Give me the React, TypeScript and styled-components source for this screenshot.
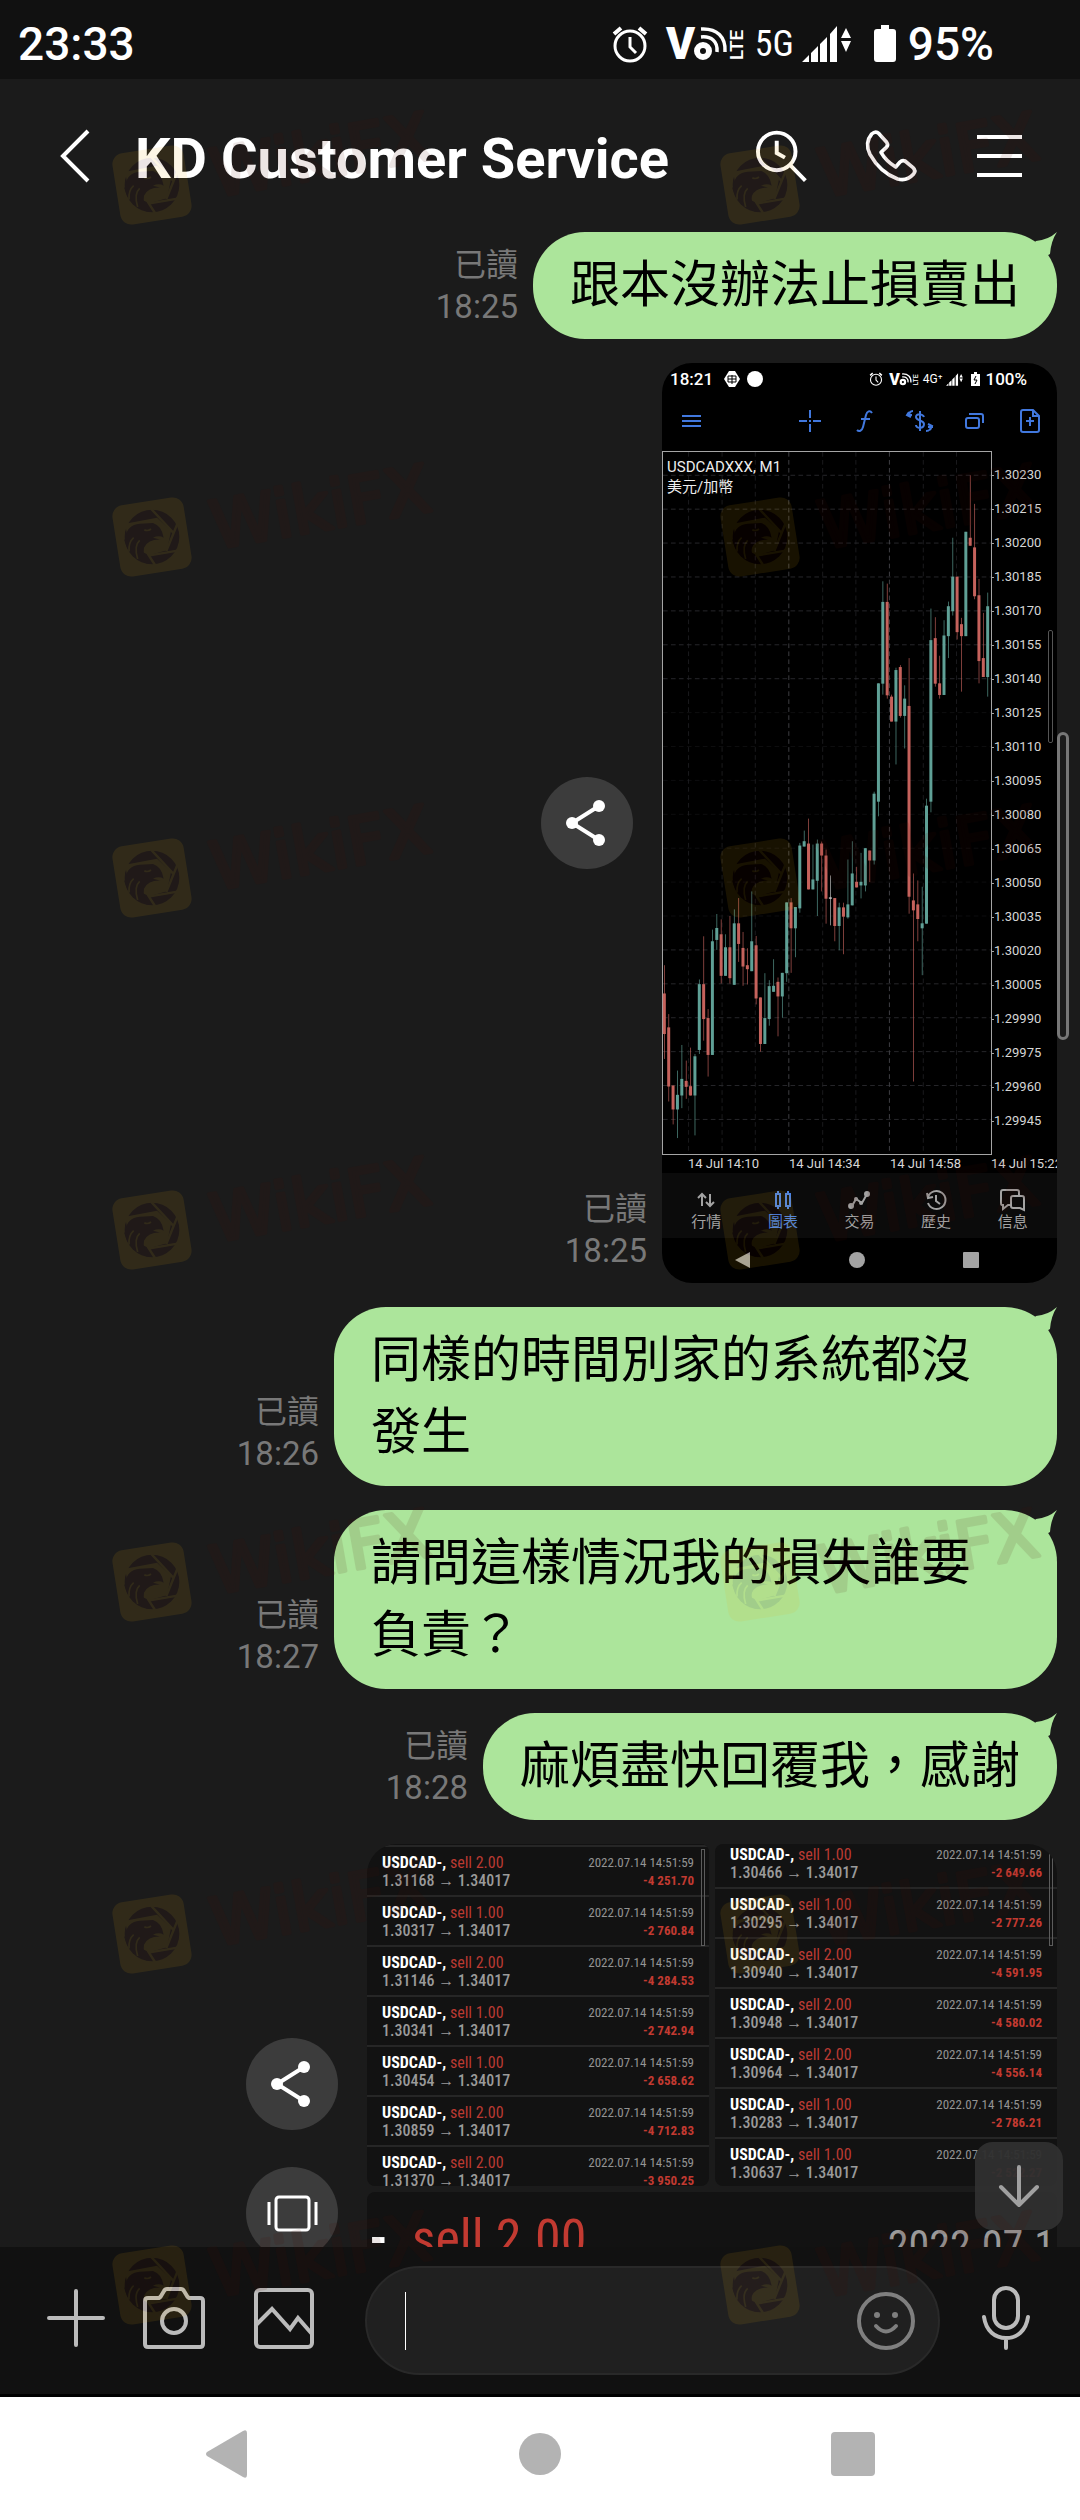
import React from "react";
import styled, { createGlobalStyle } from "styled-components";

const sans = `Roboto, "Noto Sans CJK TC", sans-serif`;
const condensed = `"Roboto Condensed", "Liberation Sans Narrow", Roboto, sans-serif`;

const GlobalStyle = createGlobalStyle`
  *, *::before, *::after { box-sizing: border-box; }
  body { margin: 0; background: #1b1b1b; font-family: ${sans}; }
  button { padding: 0; border: 0; background: none; color: inherit; font: inherit; cursor: pointer; }
  svg { display: block; overflow: visible; }
`;

/* ---------- shell ---------- */

const Screen = styled.div`
  position: relative;
  display: flex;
  flex-direction: column;
  height: 100vh;
  overflow: hidden;
  background: #1b1b1b;
  color: #fff;
`;

const StatusBar = styled.div`
  display: flex;
  align-items: center;
  justify-content: space-between;
  flex: none;
  height: 79px;
  padding: 8px 86px 0 18px;
  background: #111;
  font-size: 46px;
  font-weight: 500;
  line-height: 54px;
`;

const StatusIcons = styled.div`
  display: flex;
  align-items: center;
  gap: 8px;
`;

const Network = styled.span`
  font-family: ${condensed};
  font-size: 36px;
  font-weight: 400;
  line-height: 40px;
`;

const Header = styled.header`
  display: flex;
  align-items: center;
  flex: none;
  height: 153px;
  padding: 0 26px 0 16px;
`;

const HeaderButton = styled.button<{ $width: number }>`
  display: flex;
  align-items: center;
  justify-content: center;
  flex: none;
  width: ${(p) => p.$width}px;
  height: 109px;
`;

const Title = styled.h1`
  flex: 1;
  margin: 0;
  padding: 6px 0 0 1px;
  font-size: 56px;
  font-weight: 700;
  line-height: 66px;
  white-space: nowrap;
`;

/* ---------- conversation ---------- */

const Chat = styled.main`
  position: relative;
  flex: 1;
  min-height: 0;
  overflow: hidden;
`;

const Messages = styled.div`
  display: flex;
  flex-direction: column;
  gap: 24px;
  padding-right: 23px;
`;

const Row = styled.div`
  display: flex;
  justify-content: flex-end;
  align-items: flex-end;
`;

const Meta = styled.div`
  padding-bottom: 11px;
  margin-right: 15px;
  color: #787878;
  font-size: 32px;
  line-height: 42px;
  text-align: right;
`;

const SentAt = styled.div`
  font-size: 33px;
`;

const BubbleBox = styled.div`
  position: relative;
  max-width: 723px;
  padding: 12px 37px 23px;
  border-radius: 52px;
  background: #ace59b;
  color: #000;
  font-family: "Noto Sans CJK TC", sans-serif;
  font-size: 50px;
  line-height: 72px;
`;

const Tail = styled.svg`
  position: absolute;
  top: 0;
  right: 0;
`;

const Side = styled.div`
  display: grid;
  grid-template-rows: 1fr auto 1fr;
  align-self: stretch;
  justify-items: end;
`;

const SideActions = styled.div`
  display: flex;
  flex-direction: column;
  grid-row: 2;
  gap: 37px;
  margin-right: 29px;
`;

const SideMeta = styled.div`
  grid-row: 3;
  align-self: end;
`;

const RoundButton = styled.button`
  width: 92px;
  height: 92px;
  border-radius: 50%;
  background: #3c3c3c;
`;

const ScrollThumb = styled.div`
  position: absolute;
  top: 500px;
  right: 11px;
  width: 12px;
  height: 308px;
  border: 3px solid #777;
  border-radius: 6px;
`;

const JumpButton = styled.button`
  position: absolute;
  right: 17px;
  bottom: 17px;
  display: flex;
  align-items: center;
  justify-content: center;
  width: 88px;
  height: 88px;
  border-radius: 18px;
  background: rgba(48, 48, 48, 0.96);
`;

/* ---------- shared trading screenshot ---------- */

const Shot = styled.div`
  position: relative;
  width: 395px;
  height: 920px;
  border-radius: 30px;
  background: #000;
  overflow: hidden;
`;

const ShotStatus = styled.div`
  display: flex;
  align-items: center;
  height: 32px;
  padding: 0 30px 0 8px;
  font-size: 17px;
  font-weight: 500;
  line-height: 20px;
`;

const ShotStatusLeft = styled.div`
  display: flex;
  align-items: center;
  gap: 8px;
  flex: 1;
`;

const ShotStatusRight = styled.div`
  display: flex;
  align-items: center;
  gap: 4px;
`;

const SmallNetwork = styled.span`
  font-size: 12px;
  font-weight: 400;
`;

const ShotToolbar = styled.div`
  display: flex;
  align-items: center;
  justify-content: space-between;
  height: 52px;
  margin-bottom: 4px;
  padding: 0 15px 0 18px;
  color: #4178de;
`;

const ToolGroup = styled.div`
  display: flex;
  gap: 31px;
`;

const ChartArea = styled.div`
  display: flex;
  height: 704px;
`;

const ChartFrame = styled.div`
  position: relative;
  width: 330px;
  border: 1px solid #a5a5a5;
`;

const Pair = styled.div`
  position: absolute;
  top: 5px;
  left: 4px;
  color: #eee;
  font-size: 15px;
  line-height: 20px;
`;

const Prices = styled.ol`
  flex: 1;
  margin: 0;
  padding: 7px 0 0;
  list-style: none;
  color: #d6d6d6;
  font-size: 13px;
  line-height: 34px;
`;

const Price = styled.li`
  display: flex;
  align-items: center;
  height: 34px;

  &::before {
    content: "";
    width: 2px;
    height: 1px;
    background: #a5a5a5;
  }
`;

const Times = styled.div`
  display: flex;
  height: 18px;
  padding-left: 26px;
  color: #d8d8d8;
  font-size: 13px;
  line-height: 18px;
  white-space: nowrap;
`;

const Time = styled.span`
  flex: none;
  width: 101px;
`;

const Tabs = styled.div`
  display: flex;
  height: 65px;
  padding: 0 6px;
  background: #0b0b0b;
`;

const Tab = styled.button<{ $active?: boolean }>`
  display: flex;
  flex: 1;
  flex-direction: column;
  align-items: center;
  padding-top: 15px;
  color: ${(p) => (p.$active ? "#4a83e6" : "#a3a3a3")};
  font-size: 15px;
  line-height: 20px;
`;

const ShotNav = styled.div`
  display: flex;
  align-items: center;
  justify-content: center;
  gap: 98px;
  height: 43px;
  padding-right: 6px;
`;

const ShotThumb = styled.div`
  position: absolute;
  top: 267px;
  right: 4px;
  width: 5px;
  height: 113px;
  border: 1px solid #555;
  border-radius: 2px;
`;

/* ---------- album ---------- */

const Album = styled.div`
  display: grid;
  grid-template-columns: 342px 342px;
  grid-template-rows: 342px 261px;
  gap: 6px;
`;

const Tile = styled.div<{ $radius: string; $shift: number }>`
  position: relative;
  padding-top: ${(p) => Math.max(p.$shift, 0)}px;
  border-radius: ${(p) => p.$radius};
  background: #121212;
  overflow: hidden;
`;

const Ledger = styled.ul<{ $shift: number }>`
  margin: ${(p) => Math.min(p.$shift, 0)}px 0 0;
  padding: 0;
  list-style: none;
`;

const Deal = styled.li`
  display: grid;
  grid-template-columns: 1fr auto;
  align-content: start;
  height: 50px;
  padding: 7px 15px 0;
  border-top: 2px solid #262626;
  font-family: ${condensed};
  font-size: 16px;
  line-height: 18px;
  white-space: nowrap;
`;

const Instrument = styled.span`
  color: #fff;
  font-weight: 700;
`;

const Order = styled.span`
  color: #bb3a32;
  font-weight: 400;
`;

const Move = styled.span`
  color: #9a9a9a;
  font-weight: 500;
`;

const Stamp = styled.span`
  color: #949494;
  font-size: 13px;
  text-align: right;
`;

const Loss = styled.span`
  color: #c23a31;
  font-size: 13px;
  font-weight: 700;
  text-align: right;
`;

const TileThumb = styled.div`
  position: absolute;
  top: 5px;
  right: 4px;
  width: 4px;
  height: 97px;
  border: 1px solid #5c5c5c;
`;

const WideTile = styled.div`
  display: flex;
  grid-column: 1 / 3;
  align-items: flex-start;
  padding: 14px 0 0 2px;
  border-radius: 8px 8px 30px 30px;
  background: #121212;
  font-family: ${condensed};
  font-size: 52px;
  line-height: 66px;
  white-space: nowrap;
  overflow: hidden;
`;

const WideOrder = styled.span`
  flex: none;
  width: 500px;
  padding-left: 24px;
  color: #c23a31;
`;

const WideStamp = styled.span`
  padding-top: 14px;
  color: #9a9a9a;
  font-size: 42px;
  line-height: 52px;
`;

/* ---------- composer and system navigation ---------- */

const Composer = styled.form`
  display: flex;
  align-items: flex-start;
  flex: none;
  padding: 19px 8px 19px 28px;
  border-bottom: 3px solid #000;
  background: #111;
`;

const ComposerButton = styled.button<{ $width: number }>`
  display: flex;
  align-items: center;
  justify-content: center;
  flex: none;
  width: ${(p) => p.$width}px;
  height: 103px;
`;

const Field = styled.label`
  display: flex;
  align-items: center;
  flex: 1;
  min-width: 0;
  height: 109px;
  margin-left: 21px;
  padding: 0 22px 0 38px;
  border: 2px solid #292929;
  border-radius: 55px;
  background: #202020;
`;

const Caret = styled.span`
  flex: none;
  width: 1px;
  height: 58px;
  background: #fff;
`;

const TextInput = styled.input`
  flex: 1;
  min-width: 0;
  height: 72px;
  padding: 0;
  border: 0;
  outline: 0;
  background: transparent;
  color: #fff;
  font-family: ${sans};
  font-size: 46px;
`;

const SmileIcon = styled.svg`
  flex: none;
`;

const SystemNav = styled.nav`
  display: flex;
  align-items: center;
  justify-content: space-between;
  flex: none;
  height: 123px;
  padding: 0 19% 10px;
  background: #fff;
`;

const Watermarks = styled.div`
  position: absolute;
  inset: 0;
  overflow: hidden;
  pointer-events: none;
`;

const MarkSvg = styled.svg`
  position: absolute;
`;

/* ---------- data ---------- */

// direction, high, body top, body bottom, low
type Candle = [string, number, number, number, number];
const candles: Candle[] = [
  ["r", 498, 583, 705, 780], ["r", 645, 685, 863, 908], ["r", 860, 860, 932, 977],
  ["g", 815, 888, 932, 1018], ["g", 738, 840, 890, 928], ["r", 785, 846, 864, 900],
  ["r", 746, 862, 890, 890], ["g", 765, 772, 890, 1010], ["g", 541, 555, 753, 765],
  ["r", 411, 555, 660, 725], ["r", 630, 657, 768, 833], ["g", 391, 426, 768, 768],
  ["g", 344, 386, 422, 452], ["r", 360, 405, 530, 553], ["g", 405, 444, 530, 530],
  ["r", 350, 444, 537, 553], ["g", 330, 372, 557, 557], ["r", 296, 372, 434, 488],
  ["r", 398, 446, 502, 560], ["r", 447, 498, 510, 556], ["g", 276, 426, 516, 516],
  ["r", 410, 438, 598, 616], ["r", 595, 595, 735, 758], ["g", 522, 657, 735, 735],
  ["g", 543, 561, 660, 680], ["g", 480, 560, 578, 578], ["r", 535, 548, 592, 712],
  ["g", 521, 521, 592, 656], ["g", 309, 309, 522, 548], ["r", 296, 309, 387, 521],
  ["g", 323, 323, 387, 474], ["g", 130, 138, 327, 340], ["g", 93, 125, 141, 141],
  ["r", 57, 132, 270, 270], ["g", 135, 240, 270, 270], ["g", 120, 132, 244, 350],
  ["r", 126, 132, 168, 276], ["r", 150, 168, 298, 373], ["w", 228, 294, 298, 378],
  ["r", 296, 296, 380, 426], ["g", 310, 324, 380, 453], ["r", 310, 324, 352, 465],
  ["g", 180, 315, 354, 358], ["g", 125, 222, 318, 318], ["r", 202, 247, 264, 264],
  ["g", 160, 247, 258, 297], ["g", 146, 146, 258, 276], ["r", 153, 153, 183, 248],
  ["g", -24, -18, 183, 195], ["g", -350, -350, 6, 50], ["g", -657, -595, -349, -316],
  ["r", -650, -595, -314, -304], ["r", -316, -310, -235, -235], ["g", -397, -390, -235, -106],
  ["r", -405, -399, -252, -247], ["g", -344, -304, -252, -154], ["r", -426, -282, 292, 343],
  ["r", 222, 303, 333, 848], ["r", 243, 315, 359, 426], ["g", 262, 372, 387, 528],
  ["g", -3, 18, 373, 373], ["g", -575, -480, 6, 38], ["r", -549, -486, -349, -340],
  ["r", -433, -350, -315, -304], ["g", -540, -494, -315, -315], ["g", -596, -582, -492, -426],
  ["g", -788, -671, -567, -554], ["r", -671, -671, -504, -482], ["r", -547, -528, -492, -325],
  ["g", -806, -806, -492, -492], ["r", -976, -788, -764, -764], ["r", -890, -759, -612, -603],
  ["r", -664, -615, -417, -350], ["r", -562, -426, -369, -369], ["g", -623, -582, -369, -310],
];
const candleColor: Record<string, string> = { r: "#c5625c", g: "#5fa096", w: "#ccc" };

const prices = Array.from({ length: 20 }, (_, i) => ((130230 - 15 * i) / 100000).toFixed(5));
const times = ["14 Jul 14:10", "14 Jul 14:34", "14 Jul 14:58", "14 Jul 15:22"];

type DealData = { side: string; open: string; loss: string };
const leftDeals: DealData[] = [
  { side: "sell 2.00", open: "1.31168", loss: "-4 251.70" },
  { side: "sell 1.00", open: "1.30317", loss: "-2 760.84" },
  { side: "sell 2.00", open: "1.31146", loss: "-4 284.53" },
  { side: "sell 1.00", open: "1.30341", loss: "-2 742.94" },
  { side: "sell 1.00", open: "1.30454", loss: "-2 658.62" },
  { side: "sell 2.00", open: "1.30859", loss: "-4 712.83" },
  { side: "sell 2.00", open: "1.31370", loss: "-3 950.25" },
];
const rightDeals: DealData[] = [
  { side: "sell 1.00", open: "1.30466", loss: "-2 649.66" },
  { side: "sell 1.00", open: "1.30295", loss: "-2 777.26" },
  { side: "sell 2.00", open: "1.30940", loss: "-4 591.95" },
  { side: "sell 2.00", open: "1.30948", loss: "-4 580.02" },
  { side: "sell 2.00", open: "1.30964", loss: "-4 556.14" },
  { side: "sell 1.00", open: "1.30283", loss: "-2 786.21" },
  { side: "sell 1.00", open: "1.30637", loss: "-2 522.27" },
];

/* ---------- pieces ---------- */

function AlarmIcon({ width, height }: { width: number; height: number }) {
  return (
    <svg width={width} height={height} viewBox="0 0 38 38" preserveAspectRatio="xMinYMid" fill="none" stroke="#fff" strokeWidth="3">
      <circle cx="19" cy="21" r="15" />
      <path d="M19 12V22L25 28" />
      <path d="M3 9L10 3M35 9L28 3" strokeWidth="4" />
    </svg>
  );
}

function VolteIcon({ width, height }: { width: number; height: number }) {
  return (
    <svg width={width} height={height} viewBox="0 0 82 40" fill="none" stroke="#fff">
      <text x="1" y="35" fill="#fff" stroke="none" fontFamily="Roboto, sans-serif" fontSize="44" fontWeight="900">V</text>
      <circle cx="38" cy="27" r="6" strokeWidth="6" />
      <path d="M36 5C52 4 61 13 60 28M36 13C46 12 53 17 52 28" strokeWidth="3.5" />
      <text transform="translate(78 36) rotate(-90)" fill="#fff" stroke="none" fontFamily="Roboto, sans-serif" fontSize="19" fontWeight="500">LTE</text>
    </svg>
  );
}

function SignalIcon({ width, height }: { width: number; height: number }) {
  return (
    <svg width={width} height={height} viewBox="0 0 58 38" fill="#fff">
      <path d="M0 37L7 30V37ZM9 28L16 21V37H9ZM18 19L25 12V37H18ZM28 9L35 1V37H28Z" />
      <path d="M39 13L44 3L49 13ZM39 16H49L44 27Z" />
    </svg>
  );
}

function ShareButton() {
  return (
    <RoundButton type="button" aria-label="分享">
      <svg width="92" height="92" viewBox="0 0 92 92" fill="#fff" stroke="#fff">
        <path d="M58 29L31 46L58 63" fill="none" strokeWidth="4" />
        <circle cx="58" cy="29" r="6" stroke="none" />
        <circle cx="31" cy="46" r="6" stroke="none" />
        <circle cx="58" cy="63" r="6" stroke="none" />
      </svg>
    </RoundButton>
  );
}

function ReadMeta({ time }: { time: string }) {
  return (
    <Meta>
      <div>已讀</div>
      <SentAt>{time}</SentAt>
    </Meta>
  );
}

function Bubble({ text, time }: { text: string; time: string }) {
  return (
    <Row>
      <ReadMeta time={time} />
      <BubbleBox>
        {text}
        <Tail width="26" height="26" viewBox="0 0 26 26" fill="#ace59b">
          <path d="M26 0Q17 8 5 9L0 14L12 26L19 22Q20 9 26 0Z" />
        </Tail>
      </BubbleBox>
    </Row>
  );
}

function CandleChart() {
  const minor = [143, 244, 344, 547, 647, 850, 950];
  return (
    <svg width="328" height="702" viewBox="66 -1046 988 2112" preserveAspectRatio="none">
      <g stroke="#26262a" strokeWidth="3" strokeDasharray="14 10">
        {prices.map((p, i) => (
          <line key={p} x1="66" x2="1054" y1={-976 + 102 * i} y2={-976 + 102 * i} opacity={i > 6 && i < 14 ? 0.35 : 1} />
        ))}
        {minor.map((x) => (
          <line key={x} x1={x} x2={x} y1="-1046" y2="1066" opacity="0.7" />
        ))}
      </g>
      <g stroke="#3e3e42" strokeWidth="3" strokeDasharray="14 10">
        <line x1="445" x2="445" y1="-1046" y2="1066" />
        <line x1="748" x2="748" y1="-1046" y2="1066" />
      </g>
      {candles.map(([dir, high, top, bottom, low], i) => {
        const x = 70 + (974 / 74) * i;
        return (
          <g key={i} fill={candleColor[dir]}>
            <rect x={x - 1} y={high} width="2.4" height={low - high} opacity="0.8" />
            <rect x={x - 4.5} y={top} width="9" height={bottom - top} />
          </g>
        );
      })}
    </svg>
  );
}

function TradingShot() {
  return (
    <Shot>
      <ShotStatus>
        <ShotStatusLeft>
          <span>18:21</span>
          <svg width="40" height="16" viewBox="0 0 40 16">
            <path d="M8 0H14L19 8L14 16H8L3 8Z" fill="#fff" />
            <path d="M7 5H15V11H7ZM11 4V13M7 8H15" fill="none" stroke="#000" />
            <circle cx="34" cy="8" r="8" fill="#fff" />
          </svg>
        </ShotStatusLeft>
        <ShotStatusRight>
          <AlarmIcon width={16} height={14} />
          <VolteIcon width={30} height={15} />
          <SmallNetwork>4G⁺</SmallNetwork>
          <SignalIcon width={20} height={13} />
          <svg width="11" height="14" viewBox="0 0 11 14">
            <path d="M4 0H7V2H10V14H1V2H4Z" fill="#fff" />
            <path d="M6 4L4 8H7L5 12" fill="none" stroke="#000" />
          </svg>
          <span>100%</span>
        </ShotStatusRight>
      </ShotStatus>
      <ShotToolbar>
        <svg width="24" height="24" viewBox="0 0 24 24" stroke="currentColor" strokeWidth="2">
          <path d="M2 7H21M2 12H21M2 17H21" />
        </svg>
        <ToolGroup>
          <svg width="24" height="24" viewBox="0 0 24 24" stroke="currentColor" strokeWidth="2">
            <path d="M12 1V9M12 15V23M1 12H9M15 12H23M12 11V13" />
          </svg>
          <svg width="24" height="24" viewBox="0 0 24 24" fill="none" stroke="currentColor" strokeWidth="2">
            <path d="M19 4C17 1 14 2 13 6L10 18C9 22 6 23 4 21M8 10H17" />
          </svg>
          <svg width="24" height="24" viewBox="2 0 24 24" fill="none" stroke="currentColor" strokeWidth="2">
            <path d="M18 8C17 5 10 4 10 8C10 12 18 11 18 15C18 20 10 20 10 16M14 2V22" />
            <path d="M1 6H6M7 2C4 2 3 4 3 7M3 3L1 6L5 8M27 18H22M20 22C24 22 25 20 25 16M22 15L26 17L24 21" />
          </svg>
          <svg width="24" height="24" viewBox="0 0 24 24" fill="none" stroke="currentColor" strokeWidth="2">
            <rect x="3" y="9" width="13" height="10" rx="2" />
            <path d="M6 5H18Q20 5 20 7V14" />
          </svg>
          <svg width="24" height="24" viewBox="0 0 24 24" fill="none" stroke="currentColor" strokeWidth="2">
            <path d="M3 3Q3 1 5 1H15L21 7V21Q21 23 19 23H5Q3 23 3 21ZM12 8V17M8 12H16M15 2V7H20" />
          </svg>
        </ToolGroup>
      </ShotToolbar>
      <ChartArea>
        <ChartFrame>
          <CandleChart />
          <Pair>
            <div>USDCADXXX, M1</div>
            <div>美元/加幣</div>
          </Pair>
        </ChartFrame>
        <Prices>
          {prices.map((p) => (
            <Price key={p}>{p}</Price>
          ))}
        </Prices>
      </ChartArea>
      <Times>
        {times.map((t) => (
          <Time key={t}>{t}</Time>
        ))}
      </Times>
      <Tabs>
        <Tab type="button">
          <svg width="26" height="24" viewBox="0 0 26 24" fill="none" stroke="currentColor" strokeWidth="2">
            <path d="M9 18V6M5 10L9 6L13 10M17 6V18M13 14L17 18L21 14" />
          </svg>
          行情
        </Tab>
        <Tab type="button" $active>
          <svg width="26" height="24" viewBox="0 0 26 24" fill="none" stroke="currentColor" strokeWidth="2">
            <path d="M6 6H10V18H6ZM16 6H20V18H16ZM8 3V6M8 18V21M18 3V6M18 18V21" />
          </svg>
          圖表
        </Tab>
        <Tab type="button">
          <svg width="26" height="24" viewBox="0 0 26 24" fill="currentColor" stroke="currentColor" strokeWidth="2">
            <path d="M6 18L10 11L16 15L21 6" fill="none" />
            <circle cx="5" cy="18" r="2" />
            <circle cx="10" cy="11" r="1" />
            <circle cx="15" cy="15" r="1" />
            <circle cx="21" cy="6" r="2" />
          </svg>
          交易
        </Tab>
        <Tab type="button">
          <svg width="26" height="24" viewBox="0 0 26 24" fill="none" stroke="currentColor" strokeWidth="2">
            <path d="M4 5L5 10L10 9M5 9A9 9 0 1 1 5 15M13 7V13L17 16" />
          </svg>
          歷史
        </Tab>
        <Tab type="button">
          <svg width="28" height="24" viewBox="0 0 28 24" fill="none" stroke="currentColor" strokeWidth="2">
            <path d="M12 17H9L4 21V17H3Q2 17 2 15V4Q2 2 4 2H18Q20 2 20 4V8" />
            <path d="M14 8H23Q25 8 25 10V22L21 20H14Q12 20 12 18V10Q12 8 14 8Z" />
          </svg>
          信息
        </Tab>
      </Tabs>
      <ShotNav>
        <svg width="16" height="16" viewBox="0 0 16 16" fill="#a3a3a3"><path d="M0 8L15 0V16Z" /></svg>
        <svg width="16" height="16" viewBox="0 0 16 16" fill="#a3a3a3"><circle cx="8" cy="8" r="8" /></svg>
        <svg width="16" height="16" viewBox="0 0 16 16" fill="#a3a3a3"><rect width="16" height="16" rx="1" /></svg>
      </ShotNav>
      <ShotThumb />
    </Shot>
  );
}

function DealTile({ deals, radius, shift }: { deals: DealData[]; radius: string; shift: number }) {
  return (
    <Tile $radius={radius} $shift={shift}>
      <Ledger $shift={shift}>
        {deals.map((d) => (
          <Deal key={d.open}>
            <span>
              <Instrument>USDCAD-,</Instrument> <Order>{d.side}</Order>
            </span>
            <Stamp>2022.07.14 14:51:59</Stamp>
            <Move>{d.open} → 1.34017</Move>
            <Loss>{d.loss}</Loss>
          </Deal>
        ))}
      </Ledger>
      <TileThumb />
    </Tile>
  );
}

function Watermark({ left, top }: { left: number; top: number }) {
  return (
    <MarkSvg style={{ left, top }} width="340" height="130" viewBox="0 0 340 130" opacity="0.1">
      <g transform="rotate(-9 43 85)">
        <rect x="7" y="49" width="72" height="72" rx="11" fill="#edb111" />
      </g>
      <g transform="scale(.33333) translate(-58 -35)">
        <circle cx="187" cy="290" r="82" fill="#4b0a00" />
        <path d="M106 250L202 232L244 272L232 330L178 345L130 320L112 280Z" fill="#edb111" />
        <path d="M184 205L250 276M264 248L230 332M268 330L176 346M174 340L196 374" stroke="#edb111" strokeWidth="7" fill="none" />
        <path d="M108 290Q112 254 150 250L190 248Q216 256 222 292Q208 284 190 292L214 298Q176 296 163 322Q158 346 180 372Q150 364 140 340Q128 340 116 330Q108 316 104 300Z" fill="#4b0a00" />
        <path d="M164 268Q174 274 184 266M150 300Q132 316 144 356M132 292Q116 306 118 334" stroke="#edb111" strokeWidth="5" fill="none" />
      </g>
      <text
        transform="translate(106 97) rotate(-10)"
        fill="#4b0a00"
        stroke="#4b0a00"
        strokeWidth="4"
        strokeLinejoin="round"
        fontFamily='"DejaVu Sans", sans-serif'
        fontWeight="400"
        fontSize="66"
      >
        WikiFX
      </text>
    </MarkSvg>
  );
}

const markTops = [100, 452, 793, 1145, 1497, 1849, 2200];

export default function App() {
  return (
    <Screen>
      <GlobalStyle />
      <StatusBar>
        <span>23:33</span>
        <StatusIcons>
          <AlarmIcon width={46} height={38} />
          <VolteIcon width={82} height={40} />
          <Network>5G</Network>
          <SignalIcon width={58} height={38} />
          <svg width="32" height="38" viewBox="0 0 32 38" fill="#fff">
            <path d="M13 0H21V4H25Q28 4 28 7V34Q28 37 25 37H9Q6 37 6 34V7Q6 4 9 4H13Z" />
          </svg>
          <span>95%</span>
        </StatusIcons>
      </StatusBar>

      <Header>
        <HeaderButton type="button" $width={118} aria-label="返回">
          <svg width="30" height="54" viewBox="0 0 30 54" fill="none" stroke="#fff" strokeWidth="4">
            <path d="M28 2L3 27L28 52" />
          </svg>
        </HeaderButton>
        <Title>KD Customer Service</Title>
        <HeaderButton type="button" $width={109} aria-label="搜尋">
          <svg width="54" height="54" viewBox="465 388 164 164" fill="none" stroke="#fff" strokeWidth="12">
            <circle cx="531" cy="456" r="57" />
            <path d="M572 498L618 545M531 424V461L556 475" />
          </svg>
        </HeaderButton>
        <HeaderButton type="button" $width={109} aria-label="通話">
          <svg width="54" height="54" viewBox="790 388 162 162" fill="none" stroke="#fff" strokeWidth="11" strokeLinejoin="round">
            <path d="M813 403Q825 392 835 402L858 428Q864 436 857 443L841 458Q856 484 885 502L898 487Q905 480 913 484L937 504Q947 513 938 524Q918 546 891 538Q838 518 808 464Q791 430 813 403Z" />
          </svg>
        </HeaderButton>
        <HeaderButton type="button" $width={109} aria-label="選單">
          <svg width="46" height="44" viewBox="0 0 46 44" stroke="#fff" strokeWidth="4">
            <path d="M0 3H45M0 22H45M0 41H45" />
          </svg>
        </HeaderButton>
      </Header>

      <Chat>
        <Messages>
          <Bubble text="跟本沒辦法止損賣出" time="18:25" />
          <Row>
            <Side>
              <SideActions>
                <ShareButton />
              </SideActions>
              <SideMeta>
                <ReadMeta time="18:25" />
              </SideMeta>
            </Side>
            <TradingShot />
          </Row>
          <Bubble text="同樣的時間別家的系統都沒發生" time="18:26" />
          <Bubble text="請問這樣情況我的損失誰要負責？" time="18:27" />
          <Bubble text="麻煩盡快回覆我，感謝" time="18:28" />
          <Row>
            <Side>
              <SideActions>
                <ShareButton />
                <RoundButton type="button" aria-label="相簿">
                  <svg width="92" height="92" viewBox="0 0 92 92" fill="none" stroke="#fff" strokeWidth="3">
                    <rect x="30" y="30" width="33" height="33" rx="3" />
                    <path d="M23 35V58M70 35V58" />
                  </svg>
                </RoundButton>
              </SideActions>
            </Side>
            <Album>
              <DealTile deals={leftDeals} radius="30px 8px 8px 8px" shift={1} />
              <DealTile deals={rightDeals} radius="8px 30px 8px 8px" shift={-7} />
              <WideTile>
                <Instrument>-</Instrument>
                <WideOrder>sell 2.00</WideOrder>
                <WideStamp>2022.07.14 14:51:59</WideStamp>
              </WideTile>
            </Album>
          </Row>
        </Messages>
        <ScrollThumb />
        <JumpButton type="button" aria-label="最新訊息">
          <svg width="44" height="44" viewBox="0 0 44 44" fill="none" stroke="#a0a0a0" strokeWidth="4" strokeLinecap="round" strokeLinejoin="round">
            <path d="M22 3V41M4 23L22 41L40 23" />
          </svg>
        </JumpButton>
      </Chat>

      <Composer onSubmit={(e) => e.preventDefault()}>
        <ComposerButton type="button" $width={96} aria-label="更多">
          <svg width="58" height="58" viewBox="0 0 58 58" stroke="#bbb" strokeWidth="4" strokeLinecap="round">
            <path d="M29 2V56M2 29H56" />
          </svg>
        </ComposerButton>
        <ComposerButton type="button" $width={100} aria-label="相機">
          <svg width="64" height="64" viewBox="0 0 64 64" fill="none" stroke="#bbb" strokeWidth="4" strokeLinejoin="round">
            <path d="M6 12H16Q18 12 19 10L22 5Q23 3 25 3H39Q41 3 42 5L45 10Q46 12 48 12H58Q61 12 61 15V58Q61 61 58 61H6Q3 61 3 58V15Q3 12 6 12Z" />
            <circle cx="32" cy="35" r="12" />
          </svg>
        </ComposerButton>
        <ComposerButton type="button" $width={120} aria-label="圖片">
          <svg width="62" height="62" viewBox="0 0 62 62" fill="none" stroke="#bbb" strokeWidth="4">
            <rect x="3" y="3" width="56" height="57" rx="4" />
            <path d="M3 38L19 22L37 42L45 31L59 47" />
          </svg>
        </ComposerButton>
        <Field>
          <Caret />
          <TextInput type="text" aria-label="輸入訊息" />
          <SmileIcon width="60" height="60" viewBox="0 0 60 60" fill="none" stroke="#7f7f7f" strokeWidth="4" strokeLinecap="round">
            <circle cx="30" cy="30" r="27" />
            <path d="M20 35Q30 46 40 35" />
            <circle cx="21" cy="24" r="3" fill="#7f7f7f" stroke="none" />
            <circle cx="39" cy="24" r="3" fill="#7f7f7f" stroke="none" />
          </SmileIcon>
        </Field>
        <ComposerButton type="button" $width={132} aria-label="語音訊息">
          <svg width="50" height="66" viewBox="0 0 50 66" fill="none" stroke="#bbb" strokeWidth="4" strokeLinecap="round">
            <rect x="13" y="3" width="24" height="40" rx="12" />
            <path d="M3 32C5 46 14 53 25 53C36 53 45 46 47 32M25 53V63" />
          </svg>
        </ComposerButton>
      </Composer>

      <SystemNav>
        <svg width="44" height="48" viewBox="0 0 44 48" fill="#b3b3b3">
          <path d="M2 22Q0 24 2 26L38 47Q42 49 42 45V3Q42 -1 38 1Z" />
        </svg>
        <svg width="42" height="42" viewBox="0 0 42 42" fill="#b3b3b3">
          <circle cx="21" cy="21" r="21" />
        </svg>
        <svg width="44" height="44" viewBox="0 0 44 44" fill="#b3b3b3">
          <rect width="44" height="44" rx="4" />
        </svg>
      </SystemNav>

      <Watermarks aria-hidden="true">
        {markTops.map((top) => (
          <React.Fragment key={top}>
            <Watermark left={109} top={top} />
            <Watermark left={717} top={top} />
          </React.Fragment>
        ))}
      </Watermarks>
    </Screen>
  );
}
